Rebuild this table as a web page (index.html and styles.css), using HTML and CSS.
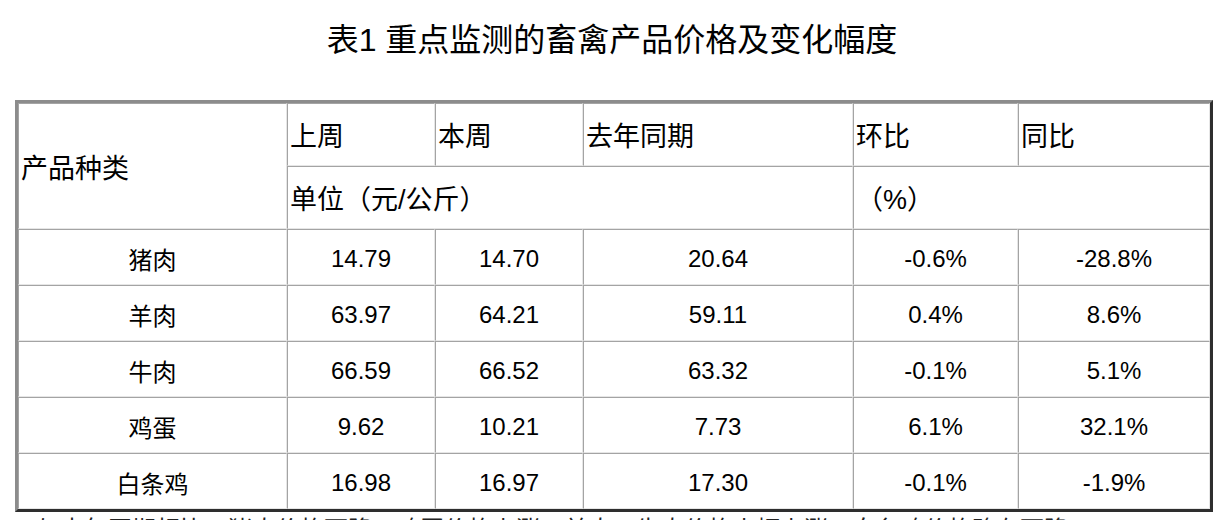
FILE: index.html
```html
<!DOCTYPE html>
<html lang="zh-CN">
<head>
<meta charset="utf-8">
<title>表1 重点监测的畜禽产品价格及变化幅度</title>
<link rel="stylesheet" href="styles.css">
</head>
<body>
<div class="page">
  <h1 class="title">表1 重点监测的畜禽产品价格及变化幅度</h1>
  <table class="price-table">
    <colgroup>
      <col class="c1"><col class="c2"><col class="c3"><col class="c4"><col class="c5"><col class="c6">
    </colgroup>
    <thead>
      <tr class="hrow">
        <th rowspan="2">产品种类</th>
        <th>上周</th>
        <th>本周</th>
        <th>去年同期</th>
        <th>环比</th>
        <th>同比</th>
      </tr>
      <tr class="hrow">
        <th colspan="3">单位（元/公斤）</th>
        <th colspan="2">（%）</th>
      </tr>
    </thead>
    <tbody>
      <tr><td>猪肉</td><td>14.79</td><td>14.70</td><td>20.64</td><td>-0.6%</td><td>-28.8%</td></tr>
      <tr><td>羊肉</td><td>63.97</td><td>64.21</td><td>59.11</td><td>0.4%</td><td>8.6%</td></tr>
      <tr><td>牛肉</td><td>66.59</td><td>66.52</td><td>63.32</td><td>-0.1%</td><td>5.1%</td></tr>
      <tr><td>鸡蛋</td><td>9.62</td><td>10.21</td><td>7.73</td><td>6.1%</td><td>32.1%</td></tr>
      <tr><td>白条鸡</td><td>16.98</td><td>16.97</td><td>17.30</td><td>-0.1%</td><td>-1.9%</td></tr>
    </tbody>
  </table>
  <p class="note">与去年同期相比，猪肉价格下降，鸡蛋价格上涨，羊肉、牛肉价格小幅上涨，白条鸡价格略有下降。</p>
</div>
</body>
</html>
```
FILE: styles.css
```css
html, body {
  margin: 0;
  padding: 0;
  background: #ffffff;
}
body {
  font-family: "Liberation Sans", "Noto Sans CJK SC", sans-serif;
  color: #000;
  overflow: hidden;
}
.page {
  width: 1224px;
}
.title {
  margin: 17px 0 0 0;
  height: 46px;
  line-height: 46px;
  font-size: 32px;
  font-weight: normal;
  text-align: center;
  font-family: "Liberation Sans", "Noto Sans CJK SC", sans-serif;
}
.price-table {
  margin: 37px 0 0 15px;
  table-layout: fixed;
  width: 1198px;
  border-collapse: separate;
  border-spacing: 0;
  border-style: solid;
  border-width: 3px;
  border-color: #8c8c8c #2e2e2e #2e2e2e #8c8c8c;
  font-size: 24px;
}
.c1 { width: 269px; }
.c2 { width: 148px; }
.c3 { width: 148px; }
.c4 { width: 270px; }
.c5 { width: 165px; }
.c6 { width: 192px; }
.price-table th,
.price-table td {
  border-style: solid;
  border-width: 1px;
  border-color: #a4a4a4 #e6e6e6 #e6e6e6 #a4a4a4;
  padding: 0 2px;
  font-weight: normal;
  vertical-align: middle;
  white-space: nowrap;
  overflow: hidden;
}
.price-table th {
  text-align: left;
  font-size: 27px;
}
.price-table td {
  text-align: center;
  padding-top: 3px;
}
.hrow {
  height: 63px;
}
.price-table tbody tr {
  height: 56px;
}
.note {
  margin: 3px 0 0 36px;
  font-size: 24px;
  line-height: 30px;
  color: #222;
}
```
